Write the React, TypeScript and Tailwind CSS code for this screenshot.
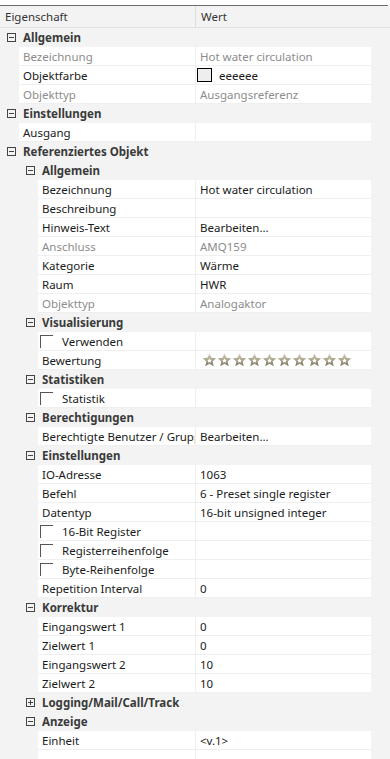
import React from 'react';

type Row =
  | { kind: 'cat'; level: number; label: string; open: boolean }
  | {
      kind: 'prop';
      level: number;
      label?: string;
      value?: string;
      disabled?: boolean;
      checkbox?: boolean;
      swatch?: boolean;
      stars?: boolean;
    };

const ROWS: Row[] = [
  { kind: 'cat', level: 0, label: 'Allgemein', open: true },
  { kind: 'prop', level: 1, label: 'Bezeichnung', value: 'Hot water circulation', disabled: true },
  { kind: 'prop', level: 1, label: 'Objektfarbe', value: 'eeeeee', swatch: true },
  { kind: 'prop', level: 1, label: 'Objekttyp', value: 'Ausgangsreferenz', disabled: true },
  { kind: 'cat', level: 0, label: 'Einstellungen', open: true },
  { kind: 'prop', level: 1, label: 'Ausgang' },
  { kind: 'cat', level: 0, label: 'Referenziertes Objekt', open: true },
  { kind: 'cat', level: 1, label: 'Allgemein', open: true },
  { kind: 'prop', level: 2, label: 'Bezeichnung', value: 'Hot water circulation' },
  { kind: 'prop', level: 2, label: 'Beschreibung' },
  { kind: 'prop', level: 2, label: 'Hinweis-Text', value: 'Bearbeiten...' },
  { kind: 'prop', level: 2, label: 'Anschluss', value: 'AMQ159', disabled: true },
  { kind: 'prop', level: 2, label: 'Kategorie', value: 'Wärme' },
  { kind: 'prop', level: 2, label: 'Raum', value: 'HWR' },
  { kind: 'prop', level: 2, label: 'Objekttyp', value: 'Analogaktor', disabled: true },
  { kind: 'cat', level: 1, label: 'Visualisierung', open: true },
  { kind: 'prop', level: 2, label: 'Verwenden', checkbox: true },
  { kind: 'prop', level: 2, label: 'Bewertung', stars: true },
  { kind: 'cat', level: 1, label: 'Statistiken', open: true },
  { kind: 'prop', level: 2, label: 'Statistik', checkbox: true },
  { kind: 'cat', level: 1, label: 'Berechtigungen', open: true },
  { kind: 'prop', level: 2, label: 'Berechtigte Benutzer / Gruppen', value: 'Bearbeiten...' },
  { kind: 'cat', level: 1, label: 'Einstellungen', open: true },
  { kind: 'prop', level: 2, label: 'IO-Adresse', value: '1063' },
  { kind: 'prop', level: 2, label: 'Befehl', value: '6 - Preset single register' },
  { kind: 'prop', level: 2, label: 'Datentyp', value: '16-bit unsigned integer' },
  { kind: 'prop', level: 2, label: '16-Bit Register', checkbox: true },
  { kind: 'prop', level: 2, label: 'Registerreihenfolge', checkbox: true },
  { kind: 'prop', level: 2, label: 'Byte-Reihenfolge', checkbox: true },
  { kind: 'prop', level: 2, label: 'Repetition Interval', value: '0' },
  { kind: 'cat', level: 1, label: 'Korrektur', open: true },
  { kind: 'prop', level: 2, label: 'Eingangswert 1', value: '0' },
  { kind: 'prop', level: 2, label: 'Zielwert 1', value: '0' },
  { kind: 'prop', level: 2, label: 'Eingangswert 2', value: '10' },
  { kind: 'prop', level: 2, label: 'Zielwert 2', value: '10' },
  { kind: 'cat', level: 1, label: 'Logging/Mail/Call/Track', open: false },
  { kind: 'cat', level: 1, label: 'Anzeige', open: true },
  { kind: 'prop', level: 2, label: 'Einheit', value: '<v.1>' },
  { kind: 'prop', level: 2 },
];

function Toggle({ open }: { open: boolean }) {
  return (
    <svg width="9" height="9" viewBox="0 0 9 9" className="shrink-0">
      <rect x="0.5" y="0.5" width="8" height="8" fill="none" stroke="#444" />
      <path d="M2 4.5h5" stroke="#444" />
      {!open && <path d="M4.5 2v5" stroke="#444" />}
    </svg>
  );
}

function Star() {
  return (
    <svg width="15" height="14" viewBox="0 0 24 23" className="shrink-0">
      <defs>
        <linearGradient id="sg" x1="0" y1="0" x2="0" y2="1">
          <stop offset="0" stopColor="#d6cfb8" />
          <stop offset="1" stopColor="#7f7660" />
        </linearGradient>
      </defs>
      <path
        d="M12 1l3.3 7 7.7.8-5.8 5.2 1.7 7.6L12 17.8l-6.9 3.8 1.7-7.6L1 8.8l7.7-.8z"
        fill="url(#sg)"
      />
      <path
        d="M12 8.5l1.2 2.6 2.8.3-2.1 1.9.6 2.8-2.5-1.4-2.5 1.4.6-2.8-2.1-1.9 2.8-.3z"
        fill="#fff"
      />
    </svg>
  );
}

function Checkbox() {
  return <span className="block w-[13px] h-[13px] border-t border-l border-[#555] shrink-0" />;
}

function PropRow({ row }: { row: Extract<Row, { kind: 'prop' }> }) {
  const indent = row.level === 1 ? 'w-[19px]' : 'w-[38px]';
  const labelW = row.level === 1 ? 'w-[176px]' : 'w-[157px]';
  const labelColor = row.disabled ? 'text-[#8c8c8c]' : 'text-[#1a1a1a]';
  return (
    <div className="flex h-[19px] bg-[#f3f3f3]">
      <div className={`${indent} shrink-0`} />
      <div
        className={`${labelW} shrink-0 bg-white border-b border-[#efefef] flex items-center overflow-hidden whitespace-nowrap ${labelColor}`}
      >
        {row.checkbox ? (
          <div className="flex items-center pl-[2px] gap-[9px]">
            <Checkbox />
            <span>{row.label}</span>
          </div>
        ) : (
          <span className="block pl-1 w-full overflow-hidden">{row.label}</span>
        )}
      </div>
      <div className="w-px shrink-0 bg-[#efefef]" />
      <div
        className={`w-[175px] shrink-0 bg-white border-b border-[#efefef] flex items-center whitespace-nowrap overflow-hidden ${
          row.disabled ? 'text-[#8c8c8c]' : 'text-[#1a1a1a]'
        }`}
      >
        {row.swatch && (
          <div className="flex items-center pl-[1px] gap-[7px]">
            <span className="block w-[15px] h-[14px] bg-[#eeeeee] border border-black" />
            <span>{row.value}</span>
          </div>
        )}
        {row.stars && (
          <div className="flex items-center pl-[6px]">
            {Array.from({ length: 10 }).map((_, i) => (
              <Star key={i} />
            ))}
          </div>
        )}
        {!row.swatch && !row.stars && row.value && <span className="pl-1">{row.value}</span>}
      </div>
      <div className="flex-1" />
    </div>
  );
}

function CatRow({ row }: { row: Extract<Row, { kind: 'cat' }> }) {
  return (
    <div
      className={`flex h-[19px] items-center bg-[#f3f3f3] font-bold text-[#3a3a3a] whitespace-nowrap ${
        row.level === 0 ? 'pl-[7px]' : 'pl-[26px]'
      }`}
    >
      <Toggle open={row.open} />
      <span className="pl-[7px]">{row.label}</span>
    </div>
  );
}

export default function App() {
  return (
    <div
      className="w-[390px] h-[759px] overflow-hidden bg-white text-[11.5px] leading-[19px]"
      style={{ fontFamily: '"Segoe UI", "Noto Sans", sans-serif' }}
    >
      <div className="h-[5px] bg-white" />
      <div className="border-t border-[#6b6b6b] mr-[2px]" />
      {/* Header */}
      <div className="flex h-[22px] bg-[#f3f3f3] border-b border-[#e2e2e2] text-[#333]">
        <div className="w-[195px] shrink-0 pl-[5px] flex items-center">Eigenschaft</div>
        <div className="w-px bg-[#dcdcdc]" />
        <div className="flex-1 pl-[5px] flex items-center">Wert</div>
      </div>
      {ROWS.map((row, i) =>
        row.kind === 'cat' ? <CatRow key={i} row={row} /> : <PropRow key={i} row={row} />
      )}
    </div>
  );
}
